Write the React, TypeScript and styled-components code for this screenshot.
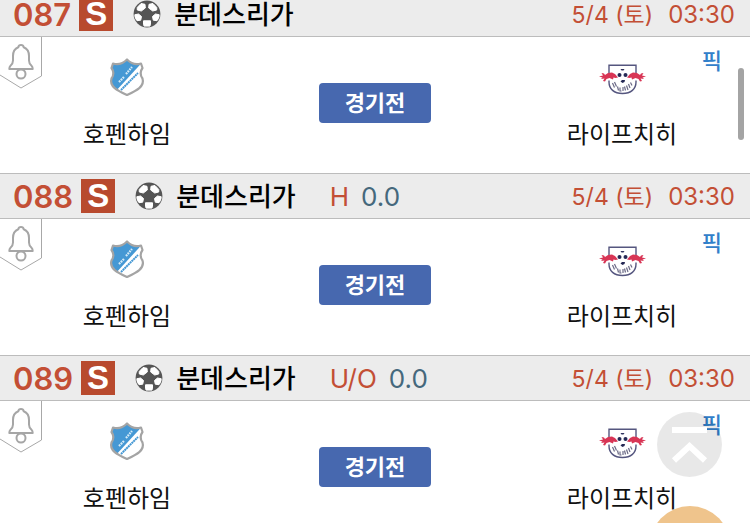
import React from "react";
import styled, { createGlobalStyle } from "styled-components";

const Global = createGlobalStyle`
  * { box-sizing: border-box; }
  html, body, #root { height: 100%; }
  body {
    margin: 0;
    overflow: hidden;
    background: #fff;
    color: #111;
    font-family: Inter, "Noto Sans CJK KR", sans-serif;
  }
`;

const Page = styled.main`
  height: 100%;
  overflow: hidden;
`;

const List = styled.div`
  margin-top: -9px;
`;

const Match = styled.article`
  height: 182px;
`;

const Header = styled.header`
  display: flex;
  align-items: center;
  height: 46px;
  padding: 0 15px 0 13px;
  background: #ececec;
  border-top: 1px solid #bcbcbc;
  border-bottom: 1px solid #bcbcbc;
  line-height: 32px;
  white-space: nowrap;
`;

const GameNumber = styled.span`
  padding-top: 2px;
  color: #c34f35;
  font-size: 31px;
  font-weight: 600;
`;

const SingleBadge = styled.span`
  display: flex;
  align-items: center;
  justify-content: center;
  width: 34px;
  height: 34px;
  margin: 0 20px 0 8px;
  background: #b84a2e;
  color: #fff;
  font-family: "Liberation Sans", sans-serif;
  font-size: 33px;
  font-weight: 700;
  line-height: 34px;
`;

const League = styled.h2`
  margin: 0 0 0 13px;
  padding-bottom: 2px;
  color: #000;
  font-family: "Noto Sans CJK KR", sans-serif;
  font-size: 26px;
  font-weight: 500;
`;

const Handicap = styled.span`
  display: flex;
  gap: 12px;
  margin-left: 34px;
  padding-top: 2px;
  font-size: 26px;
`;

const Kind = styled.span`
  color: #c34f35;
`;

const Line = styled.span`
  color: #45687c;
`;

const Kickoff = styled.time`
  display: flex;
  gap: 15px;
  margin-left: auto;
  padding-top: 2px;
  color: #c34f35;
  font-size: 24px;
`;

const KickoffDate = styled.span`
  font-size: 23px;
`;

const Body = styled.div`
  position: relative;
  display: grid;
  grid-template-columns: 1fr 112px 1fr;
  height: 136px;
`;

const Team = styled.div<{ $side: "home" | "away" }>`
  display: flex;
  flex-direction: column;
  align-items: center;
  padding-top: 19px;
  ${(p) => (p.$side === "home" ? "padding-right: 65px;" : "padding-left: 63px;")}
`;

const TeamName = styled.span`
  margin-top: 13px;
  font-family: "Noto Sans CJK KR", sans-serif;
  font-size: 24px;
  line-height: 44px;
  white-space: nowrap;
`;

const StatusButton = styled.button`
  height: 40px;
  margin-top: 46px;
  padding: 0 0 4px;
  border: 0;
  border-radius: 4px;
  background: #4768af;
  color: #fff;
  font-family: "Noto Sans CJK KR", sans-serif;
  font-size: 22px;
  font-weight: 700;
  line-height: 36px;
`;

const AlarmButton = styled.button`
  position: absolute;
  top: 0;
  left: 0;
  padding: 0;
  border: 0;
  background: none;
  svg { display: block; }
`;

const PickLink = styled.a`
  position: absolute;
  top: 6px;
  right: 28px;
  color: #3280ca;
  font-family: "Noto Sans CJK KR", sans-serif;
  font-size: 22px;
  font-weight: 500;
  line-height: 32px;
  text-decoration: none;
`;

const TopButton = styled.button`
  position: fixed;
  right: 28px;
  bottom: 46px;
  width: 65px;
  height: 65px;
  padding: 0;
  border: 0;
  border-radius: 50%;
  background: rgba(0, 0, 0, 0.09);
  svg { display: block; }
`;

const FloatingButton = styled.button`
  position: fixed;
  right: 19px;
  bottom: -66px;
  width: 82px;
  height: 83px;
  border: 0;
  border-radius: 50%;
  background: #efc48c;
`;

const ScrollThumb = styled.div`
  position: fixed;
  top: 68px;
  right: 6px;
  width: 6px;
  height: 72px;
  border-radius: 3px;
  background: #a4a4a4;
`;

const SoccerBall = () => (
  <svg width="28" height="28" viewBox="0 0 28 28" aria-hidden="true">
    <defs>
      <clipPath id="ball"><circle cx="14" cy="14" r="12.6" /></clipPath>
    </defs>
    <circle cx="14" cy="14" r="13.4" fill="#555" />
    <g clipPath="url(#ball)" fill="#fff" stroke="#fff" strokeWidth="1" strokeLinejoin="round">
      <path d="M4.200 7.500 8 3.500l4 .8.300 3.700-4 3-4-1z" />
      <path d="M23.800 7.500 20 3.500l-4 .8-.300 3.700 4 3 4-1z" />
      <path d="M1.500 14.800 5.500 14l3 2.500-.8 3.700-3.700.500-2.500-2.500z" />
      <path d="M26.500 14.800 22.500 14l-3 2.500.8 3.700 3.700.500 2.500-2.500z" />
      <path d="m10.500 20.800 7 0 0 3.700-1 2.500h-5l-1-2.500z" />
    </g>
  </svg>
);

const Bell = () => (
  <svg width="43" height="53" viewBox="0 0 43 53" fill="none" aria-hidden="true">
    <path d="M41.500 0V39L21 51 0 38" stroke="#a8a8a8" strokeWidth="1" />
    <path
      d="M21 8c-1.500 0-2.500 1-2.700 2.300C14.500 11.800 13 15 13 19v4.500c0 2.500-1 4-2.500 5.200-1 .9-1.200 1.600-1.200 3.300h23.400c0-1.700-.2-2.400-1.200-3.300C30 27.500 29 26 29 23.500V19c0-4-1.500-7.200-5.300-8.700C23.500 9 22.500 8 21 8z"
      stroke="#a6a6a6"
      strokeWidth="2"
      strokeLinejoin="round"
    />
    <circle cx="21" cy="37" r="4.500" stroke="#a6a6a6" strokeWidth="2" />
  </svg>
);

const shield =
  "M5 7.500c5 1.500 10 0 14-4 4 4 9 5.500 14 4l1.500 4.500c-2.500 3.500-2.500 7 0 10.500 2.500 8-6 12-15.500 16.500C9.500 34.500 1 30.500 3.500 22.500c2.500-3.500 2.500-7 0-10.500z";

const HoffenheimCrest = () => (
  <svg width="38" height="42" viewBox="0 0 38 42" role="img" aria-label="호펜하임">
    <defs>
      <clipPath id="shield"><path d={shield} /></clipPath>
    </defs>
    <g clipPath="url(#shield)">
      <path fill="#fff" d="M0 0h38v42H0z" />
      <path fill="#4598d4" d="M0 0h40L7 36H0z" />
      <path stroke="#4598d4" strokeWidth="2" strokeDasharray="2 .500" d="m13 34 17-17" />
      <path stroke="#d5ebf8" strokeWidth="2.200" strokeDasharray="1.800 .8" d="m11 26 5-5m2-3 6-7" />
    </g>
    <path fill="none" stroke="#a4a4a4" strokeWidth="2.200" strokeLinejoin="round" d={shield} />
  </svg>
);

const Bull = () => (
  <path
    fill="#d83555"
    d="M4 20.500 8 19.500 6.500 17l2.500.500 1 1.500 3-2 4-.500 3 1.500 3 3.500-2.500.500-2-.500-.500 2-3.500-1.500-3 1-1.500 2.500-2-.500 1.500-2.500-3.500.500 1.500-1.500z"
  />
);

const LeipzigCrest = () => (
  <svg width="54" height="42" viewBox="0 0 54 42" role="img" aria-label="라이프치히">
    <path
      d="M14 17V9.200h27V17M14 24.500v1.500c0 7 5 11.500 13.500 11.500S41 33 41 26v-1.500"
      fill="none"
      stroke="#55567f"
      strokeWidth="1.400"
    />
    <path d="M25.500 13h4l-1 1.500h-2z" fill="#31345f" />
    <Bull />
    <g transform="matrix(-1 0 0 1 55 0)"><Bull /></g>
    <circle cx="24.500" cy="19" r="2" fill="#252955" />
    <circle cx="30.500" cy="19" r="2" fill="#252955" />
    <path d="m25.500 25.500 1.500-1.500h3l-.500 2-2 1z" fill="#252955" />
    <path
      d="m17.500 27 2 4.500m0-5.500 2 4.500m1 0 1 4m1.500-3v3.500h1.500m1.500-4v4m1.500-4.500 1 4m1-5 1.500 4.500m.500-6 1.500 4m.500-5.500 1.500 3"
      stroke="#6b6a86"
      strokeWidth="1.200"
      fill="none"
    />
  </svg>
);

type Game = { id: string; kind?: string; line?: string };

const games: Game[] = [
  { id: "087" },
  { id: "088", kind: "H", line: "0.0" },
  { id: "089", kind: "U/O", line: "0.0" },
];

export default function App() {
  return (
    <Page>
      <Global />
      <List>
        {games.map((game) => (
          <Match key={game.id}>
            <Header>
              <GameNumber>{game.id}</GameNumber>
              <SingleBadge>S</SingleBadge>
              <SoccerBall />
              <League>분데스리가</League>
              {game.kind && (
                <Handicap>
                  <Kind>{game.kind}</Kind>
                  <Line>{game.line}</Line>
                </Handicap>
              )}
              <Kickoff>
                <KickoffDate>5/4 (토)</KickoffDate>
                <span>03:30</span>
              </Kickoff>
            </Header>
            <Body>
              <Team $side="home">
                <HoffenheimCrest />
                <TeamName>호펜하임</TeamName>
              </Team>
              <StatusButton type="button">경기전</StatusButton>
              <Team $side="away">
                <LeipzigCrest />
                <TeamName>라이프치히</TeamName>
              </Team>
              <AlarmButton type="button" aria-label="알림">
                <Bell />
              </AlarmButton>
              <PickLink href="#pick">픽</PickLink>
            </Body>
          </Match>
        ))}
      </List>
      <ScrollThumb />
      <TopButton type="button" aria-label="맨 위로">
        <svg width="65" height="65" viewBox="0 0 65 65" fill="none" stroke="#fff" strokeWidth="6">
          <path d="M15 18h35M17 48.500 32.500 34 48 48.500" />
        </svg>
      </TopButton>
      <FloatingButton type="button" aria-label="메뉴" />
    </Page>
  );
}
